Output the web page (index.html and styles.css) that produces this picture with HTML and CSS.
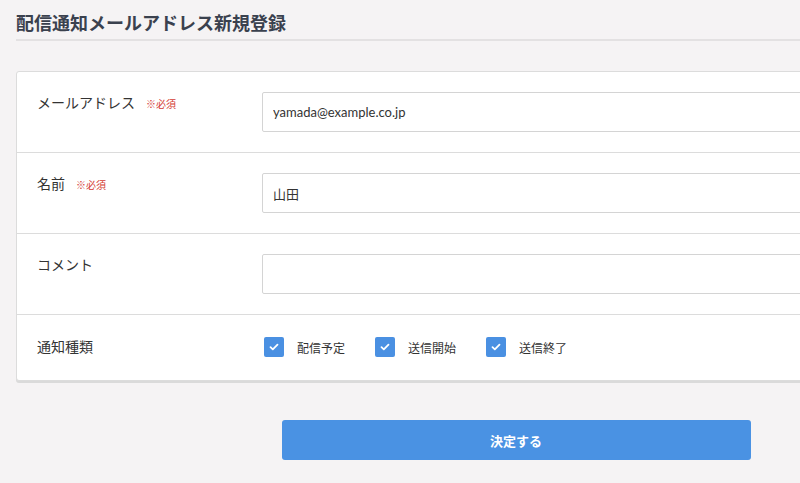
FILE: index.html
```html
<!DOCTYPE html>
<html lang="ja">
<head>
  <meta charset="UTF-8" />
  <meta name="viewport" content="width=device-width, initial-scale=1.0" />
  <title>配信通知メールアドレス新規登録</title>
  <link rel="stylesheet" href="styles.css">
</head>
<body>
  <div class="page">
    <h1 class="title">配信通知メールアドレス新規登録</h1>

    <div class="card">
      <div class="row">
        <div class="label">メールアドレス<span class="req">※必須</span></div>
        <div class="field"><input class="input" type="text" value="yamada@example.co.jp"></div>
      </div>
      <div class="row">
        <div class="label">名前<span class="req">※必須</span></div>
        <div class="field"><input class="input" type="text" value="山田"></div>
      </div>
      <div class="row">
        <div class="label">コメント</div>
        <div class="field"><input class="input" type="text" value=""></div>
      </div>
      <div class="row row-check">
        <div class="label">通知種類</div>
        <div class="field checks">
          <label class="check"><span class="box"><svg width="10" height="8" viewBox="0 0 10 8"><path d="M1.5 4.2 L3.8 6.3 L8.5 1.7" fill="none" stroke="#fff" stroke-width="1.8" stroke-linecap="round" stroke-linejoin="round"/></svg></span>配信予定</label>
          <label class="check"><span class="box"><svg width="10" height="8" viewBox="0 0 10 8"><path d="M1.5 4.2 L3.8 6.3 L8.5 1.7" fill="none" stroke="#fff" stroke-width="1.8" stroke-linecap="round" stroke-linejoin="round"/></svg></span>送信開始</label>
          <label class="check"><span class="box"><svg width="10" height="8" viewBox="0 0 10 8"><path d="M1.5 4.2 L3.8 6.3 L8.5 1.7" fill="none" stroke="#fff" stroke-width="1.8" stroke-linecap="round" stroke-linejoin="round"/></svg></span>送信終了</label>
        </div>
      </div>
    </div>

    <div class="actions">
      <button class="submit" type="button">決定する</button>
    </div>
  </div>
</body>
</html>
```

FILE: styles.css
```css
body {
  font-family: Lato, "Noto Sans CJK JP", sans-serif;
  background: #f5f3f4;
  margin: 0;
  padding: 0;
  color: #333;
}

.page {
  width: 1000px;
  padding: 0 16px;
}

.title {
  font-size: 18px;
  font-weight: bold;
  color: #3a414e;
  margin: 0;
  padding: 11px 0 4px;
  line-height: 24px;
  border-bottom: 2px solid #e3e1e2;
}

.card {
  margin-top: 30px;
  background: #fff;
  border: 1px solid #dcdcdc;
  border-radius: 3px;
  box-shadow: 0 2px 0 #dadada;
}

.row {
  display: flex;
  align-items: flex-start;
  padding: 20px;
  border-bottom: 1px solid #dcdcdc;
}

.row:last-child {
  border-bottom: none;
}

.label {
  width: 225px;
  flex-shrink: 0;
  font-size: 14px;
  line-height: 20px;
  padding-top: 1px;
  color: #333;
}

.req {
  font-size: 10px;
  color: #d43c35;
  margin-left: 11px;
}

.field {
  flex: 1;
}

.input {
  display: block;
  box-sizing: border-box;
  width: 100%;
  height: 40px;
  border: 1px solid #d4d4d4;
  border-radius: 2px;
  padding: 0 10px;
  font-family: Lato, "Noto Sans CJK JP", sans-serif;
  font-size: 13px;
  color: #333;
  background: #fff;
}

.row-check {
  padding: 22px 20px 23px 20px;
  align-items: center;
}

.row-check .label {
  padding-top: 0;
}

.checks {
  display: flex;
  align-items: center;
  padding-left: 2px;
}

.check {
  display: flex;
  align-items: center;
  font-size: 12px;
  color: #333;
  margin-right: 30px;
}

.box {
  width: 20px;
  height: 20px;
  border-radius: 2px;
  background: #4a90e2;
  display: flex;
  align-items: center;
  justify-content: center;
  margin-right: 13px;
}

.actions {
  display: flex;
  justify-content: center;
  margin-top: 39px;
}

.submit {
  width: 469px;
  height: 40px;
  border: none;
  border-radius: 3px;
  background: #4a92e3;
  color: #fff;
  font-family: Lato, "Noto Sans CJK JP", sans-serif;
  font-size: 13px;
  font-weight: bold;
}
```
